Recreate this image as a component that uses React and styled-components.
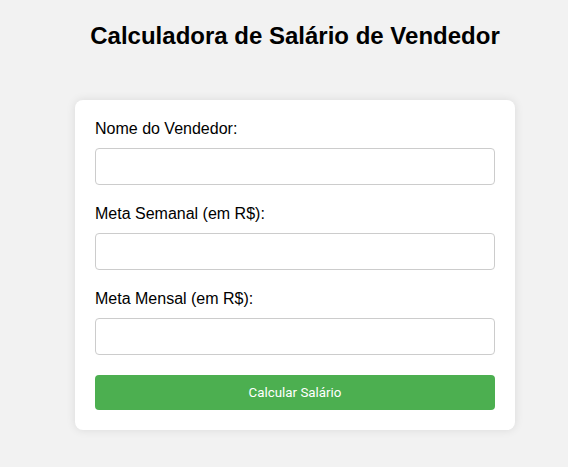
import React from 'react';
import styled, { createGlobalStyle } from 'styled-components';

const Global = createGlobalStyle`
  body {
    margin: 0;
    background: #f2f2f2;
    font-family: Arial, "Liberation Sans", sans-serif;
  }
`;

const Page = styled.div`
  padding: 22px 0 40px 22px;
  display: flex;
  flex-direction: column;
  align-items: center;
`;

const Title = styled.h1`
  margin: 0 0 50px;
  font-size: 24px;
  line-height: 28px;
  font-weight: bold;
  color: #000;
`;

const Card = styled.form`
  width: 400px;
  padding: 20px;
  background: #fff;
  border-radius: 8px;
  box-shadow: 0 0 10px rgba(0, 0, 0, 0.1);
  display: flex;
  flex-direction: column;
`;

const Label = styled.label`
  display: block;
  font-size: 16px;
  line-height: 18px;
  color: #000;
  margin-bottom: 10px;
`;

const Input = styled.input`
  box-sizing: border-box;
  width: 100%;
  height: 37px;
  padding: 8px;
  border: 1px solid #ccc;
  border-radius: 4px;
  font-size: 16px;
  margin-bottom: 20px;
`;

const Button = styled.button`
  height: 35px;
  border: none;
  border-radius: 4px;
  background: #4caf50;
  color: #fff;
  font-family: Roboto, "Liberation Sans", sans-serif;
  font-size: 13.333px;
  cursor: pointer;
`;

const fields = [
  { id: 'nome', label: 'Nome do Vendedor:' },
  { id: 'semanal', label: 'Meta Semanal (em R$):' },
  { id: 'mensal', label: 'Meta Mensal (em R$):' },
];

export default function App() {
  return (
    <>
      <Global />
      <Page>
        <Title>Calculadora de Salário de Vendedor</Title>
        <Card onSubmit={(e) => e.preventDefault()}>
          {fields.map((f) => (
            <div key={f.id}>
              <Label htmlFor={f.id}>{f.label}</Label>
              <Input id={f.id} type="text" />
            </div>
          ))}
          <Button type="submit">Calcular Salário</Button>
        </Card>
      </Page>
    </>
  );
}
